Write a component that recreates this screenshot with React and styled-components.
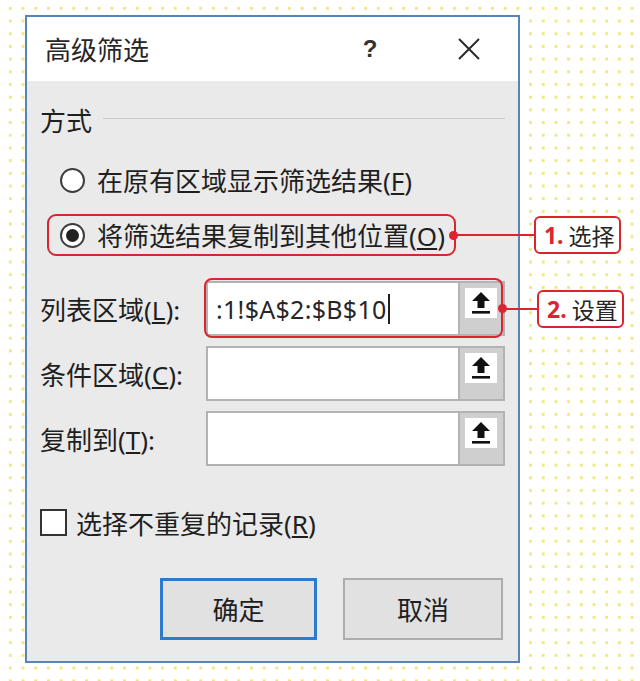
import React from "react";
import styled, { createGlobalStyle } from "styled-components";

const Global = createGlobalStyle`
  html, body { margin: 0; padding: 0; }
  body {
    width: 640px;
    height: 681px;
    overflow: hidden;
    background-color: #ffffff;
    background-image: radial-gradient(circle, #f1e77c 1.3px, rgba(255,255,255,0) 1.9px);
    background-size: 12.7px 12.7px;
    background-position: 4px 2px;
    font-family: "Noto Sans", "Noto Sans CJK SC", sans-serif;
    color: #1f1f1f;
  }
`;

const RED = "#dc2430";
const TEXT_SIZE = 26;

const Page = styled.div`
  padding: 15px 0 0 25px;
`;

const Dialog = styled.div`
  position: relative;
  box-sizing: border-box;
  width: 495px;
  height: 648px;
  border: 2px solid #5a84b5;
  display: flex;
  flex-direction: column;
`;

const TitleBar = styled.div`
  height: 64px;
  background: #ffffff;
  display: flex;
  align-items: center;
  padding: 0 26px 0 18px;
`;

const Title = styled.div`
  flex: 1;
  font-size: ${TEXT_SIZE}px;
  color: #262626;
`;

const TitleButton = styled.div`
  width: 46px;
  height: 40px;
  display: flex;
  align-items: center;
  justify-content: center;
  margin-left: ${(p) => p.$gap || 0}px;
  font-family: "Liberation Sans", sans-serif;
  font-weight: 700;
  font-size: 24px;
  color: #333;
`;

const Body = styled.div`
  flex: 1;
  background: #eaeaea;
  padding: 0 13px;
  display: flex;
  flex-direction: column;
`;

const SectionHeader = styled.div`
  margin-top: 26px;
  height: 26px;
  display: flex;
  align-items: center;
  gap: 11px;
  font-size: ${TEXT_SIZE}px;
`;

const Rule = styled.div`
  flex: 1;
  height: 1px;
  margin-top: -3px;
  background: #c9c9c9;
`;

const RadioRow = styled.label`
  display: flex;
  align-items: center;
  gap: 12px;
  height: 30px;
  font-size: ${TEXT_SIZE}px;
  white-space: nowrap;
  margin-top: ${(p) => p.$top || 0}px;
  padding-left: ${(p) => p.$indent || 0}px;
`;

const RadioCircle = styled.span`
  box-sizing: border-box;
  width: 25px;
  height: 25px;
  border-radius: 50%;
  border: 2px solid #3e3e3e;
  background: #fff;
  display: flex;
  align-items: center;
  justify-content: center;
  &::after {
    content: "";
    display: ${(p) => (p.$checked ? "block" : "none")};
    width: 13px;
    height: 13px;
    border-radius: 50%;
    background: #222;
  }
`;

const RadioHighlight = styled.div`
  position: relative;
  align-self: flex-start;
  margin-top: 19px;
  margin-left: 7px;
  border: 2px solid ${RED};
  border-radius: 9px;
  padding: 4px 9px 4px 11px;
`;

const Callout = styled.div`
  position: absolute;
  top: 50%;
  left: ${(p) => p.$left};
  transform: translateY(-50%);
  display: flex;
  align-items: center;
  z-index: 2;
`;

const Dot = styled.span`
  position: absolute;
  left: -5px;
  top: 50%;
  width: 9px;
  height: 9px;
  margin-top: -4.5px;
  border-radius: 50%;
  background: ${RED};
`;

const Line = styled.span`
  width: ${(p) => p.$len}px;
  height: 2px;
  background: ${RED};
`;

const Tag = styled.div`
  box-sizing: border-box;
  height: 38px;
  width: 87px;
  border: 2px solid ${RED};
  border-radius: 6px;
  background: #fff;
  display: flex;
  align-items: center;
  padding-left: 8px;
  font-size: 23px;
  color: #262626;
  white-space: nowrap;
`;

const TagNum = styled.span`
  color: ${RED};
  font-weight: 700;
  margin-right: 5px;
`;

const Fields = styled.div`
  margin-top: 25px;
  display: flex;
  flex-direction: column;
  gap: 10px;
`;

const FieldRow = styled.div`
  display: flex;
  align-items: center;
  height: 55px;
`;

const FieldLabel = styled.div`
  width: 166px;
  font-size: ${TEXT_SIZE}px;
  white-space: nowrap;
`;

const FieldWrap = styled.div`
  position: relative;
  flex: 1;
  height: 100%;
  display: flex;
  ${(p) =>
    p.$marked &&
    `
    &::after {
      content: "";
      position: absolute;
      top: -3px;
      bottom: -2px;
      left: -2px;
      right: 2px;
      border: 2px solid ${RED};
      border-radius: 8px;
      pointer-events: none;
    }
  `}
`;

const InputBox = styled.div`
  box-sizing: border-box;
  flex: 1;
  height: 100%;
  border: 2px solid #b3b3b3;
  background: #fff;
  display: flex;
`;

const InputText = styled.div`
  flex: 1;
  display: flex;
  align-items: center;
  padding-left: 8px;
  font-family: "Noto Sans", sans-serif;
  font-size: 25px;
  color: #262626;
  letter-spacing: 0.3px;
`;

const Caret = styled.span`
  width: 2px;
  height: 30px;
  margin-left: 1px;
  background: #1f1f1f;
`;

const PickButton = styled.div`
  box-sizing: border-box;
  width: 45px;
  border-left: 2px solid #b3b3b3;
  background: #cfcfcf;
  padding: 5px 6px 0 5px;
`;

const PickFace = styled.div`
  height: 30px;
  background: #fff;
  display: flex;
  align-items: center;
  justify-content: center;
`;

const CheckRow = styled.label`
  margin-top: 43px;
  display: flex;
  align-items: center;
  gap: 9px;
  height: 27px;
  font-size: ${TEXT_SIZE}px;
  white-space: nowrap;
`;

const CheckBox = styled.span`
  box-sizing: border-box;
  width: 27px;
  height: 27px;
  border: 2px solid #333;
  background: #fff;
`;

const ButtonRow = styled.div`
  margin-top: 42px;
  display: flex;
  justify-content: flex-end;
  gap: 26px;
  padding-right: 2px;
`;

const Button = styled.div`
  box-sizing: border-box;
  width: ${(p) => (p.$primary ? 157 : 160)}px;
  height: 62px;
  border: ${(p) => (p.$primary ? "3px solid #2f7ad0" : "2px solid #adadad")};
  background: #e1e1e1;
  display: flex;
  align-items: center;
  justify-content: center;
  font-size: ${TEXT_SIZE}px;
  color: #1f1f1f;
`;

const UpIcon = () => (
  <svg width="20" height="24" viewBox="0 0 20 24">
    <polygon points="10,1 19,10 13.5,10 13.5,17 6.5,17 6.5,10 1,10" fill="#111" />
    <rect x="1" y="20" width="18" height="2.6" fill="#111" />
  </svg>
);

const CloseIcon = () => (
  <svg width="22" height="22" viewBox="0 0 22 22">
    <path d="M1 1 L21 21 M21 1 L1 21" stroke="#2a2a2a" strokeWidth="2" />
  </svg>
);

const Field = ({ label, value, marked, children }) => (
  <FieldRow>
    <FieldLabel>{label}</FieldLabel>
    <FieldWrap $marked={marked}>
      <InputBox>
        <InputText>{value}</InputText>
        <PickButton>
          <PickFace>
            <UpIcon />
          </PickFace>
        </PickButton>
      </InputBox>
      {children}
    </FieldWrap>
  </FieldRow>
);

export default function App() {
  return (
    <>
      <Global />
      <Page>
        <Dialog>
          <TitleBar>
            <Title>高级筛选</Title>
            <TitleButton>?</TitleButton>
            <TitleButton $gap={53}>
              <CloseIcon />
            </TitleButton>
          </TitleBar>
          <Body>
            <SectionHeader>
              <span>方式</span>
              <Rule />
            </SectionHeader>
            <RadioRow $top={32} $indent={20}>
              <RadioCircle />
              <span>
                在原有区域显示筛选结果(<u>F</u>)
              </span>
            </RadioRow>
            <RadioHighlight>
              <RadioRow>
                <RadioCircle $checked />
                <span>
                  将筛选结果复制到其他位置(<u>O</u>)
                </span>
              </RadioRow>
              <Callout $left="100%">
                <Dot />
                <Line $len={80} />
                <Tag>
                  <TagNum>1.</TagNum>选择
                </Tag>
              </Callout>
            </RadioHighlight>
            <Fields>
              <Field
                marked
                label={<>列表区域(<u>L</u>):</>}
                value={
                  <>
                    :1!$A$2:$B$10
                    <Caret />
                  </>
                }
              >
                <Callout $left="calc(100% - 2px)">
                  <Dot />
                  <Line $len={34} />
                  <Tag>
                    <TagNum>2.</TagNum>设置
                  </Tag>
                </Callout>
              </Field>
              <Field label={<>条件区域(<u>C</u>):</>} />
              <Field label={<>复制到(<u>T</u>):</>} />
            </Fields>
            <CheckRow>
              <CheckBox />
              <span>
                选择不重复的记录(<u>R</u>)
              </span>
            </CheckRow>
            <ButtonRow>
              <Button $primary>确定</Button>
              <Button>取消</Button>
            </ButtonRow>
          </Body>
        </Dialog>
      </Page>
    </>
  );
}
